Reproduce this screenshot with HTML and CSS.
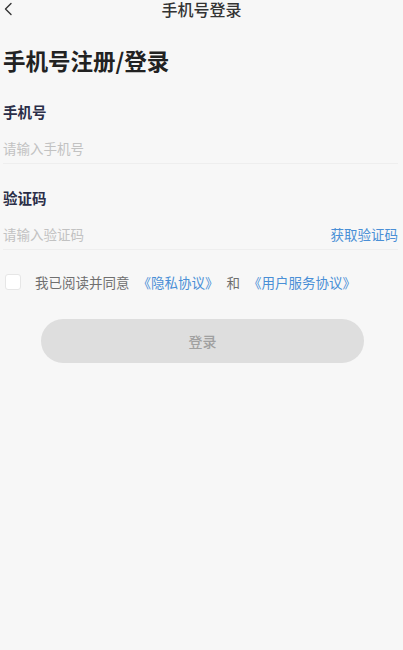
FILE: index.html
```html
<!DOCTYPE html>
<html lang="zh-CN">
<head>
<meta charset="utf-8">
<meta name="viewport" content="width=device-width, initial-scale=1">
<title>手机号登录</title>
<link rel="stylesheet" href="styles.css">
</head>
<body>
<div class="page">
  <header class="nav">
    <div class="nav-left">
      <svg class="back" width="10" height="14" viewBox="0 0 10 14" aria-hidden="true">
        <path d="M8 1.5 L2.5 7 L8 12.5" fill="none" stroke="#333" stroke-width="1.4" stroke-linecap="round" stroke-linejoin="round"/>
      </svg>
    </div>
    <div class="nav-title">手机号登录</div>
    <div class="nav-right"></div>
  </header>

  <main class="content">
    <h1 class="title">手机号注册/登录</h1>

    <div class="field field-first">
      <div class="label">手机号</div>
      <div class="input-row">
        <span class="placeholder">请输入手机号</span>
      </div>
    </div>

    <div class="field">
      <div class="label">验证码</div>
      <div class="input-row">
        <span class="placeholder">请输入验证码</span>
        <span class="get-code">获取验证码</span>
      </div>
    </div>

    <div class="agree">
      <span class="checkbox"></span>
      <span class="agree-text">我已阅读并同意</span>
      <span class="link">《隐私协议》</span>
      <span class="agree-text and">和</span>
      <span class="link">《用户服务协议》</span>
    </div>

    <button class="login-btn" type="button">登录</button>
  </main>
</div>
</body>
</html>
```

FILE: styles.css
```css
html, body {
  margin: 0;
  padding: 0;
  background: #f7f7f7;
}

body {
  font-family: "Noto Sans CJK SC", "Noto Sans", sans-serif;
  color: #333;
}

.page {
  min-height: 650px;
}

.nav {
  display: grid;
  grid-template-columns: 1fr auto 1fr;
  align-items: center;
  height: 18px;
}

.nav-left {
  display: flex;
  align-items: center;
  padding-left: 3px;
}

.back {
  display: block;
}

.nav-title {
  font-size: 16px;
  line-height: 18px;
  font-weight: 500;
  color: #333;
}

.content {
  padding: 0 5px 0 3px;
}

.title {
  margin: 27px 0 0;
  font-size: 22.5px;
  line-height: 30px;
  font-weight: 700;
  color: #222;
}

.field {
  margin-top: 24px;
}

.field-first {
  margin-top: 27px;
}

.label {
  font-size: 14.5px;
  line-height: 20px;
  font-weight: 700;
  color: #2b2e48;
}

.input-row {
  display: flex;
  align-items: center;
  justify-content: space-between;
  height: 30px;
  margin-top: 11px;
  border-bottom: 1px solid #eeeeee;
}

.placeholder {
  font-size: 13.5px;
  color: #c2c2c2;
}

.get-code {
  font-size: 13.5px;
  color: #4a8fd6;
}

.agree {
  display: flex;
  align-items: center;
  height: 20px;
  margin-top: 22px;
  padding-left: 2px;
  font-size: 13.5px;
}

.checkbox {
  width: 14px;
  height: 14px;
  border: 1px solid #e6e6e6;
  border-radius: 3px;
  background: #fff;
  margin-right: 14px;
}

.agree-text {
  color: #6f6f6f;
}

.link {
  color: #4a8fd6;
  margin-left: 8px;
}

.and {
  margin-left: 8px;
}

.login-btn {
  display: block;
  width: 323px;
  height: 44px;
  margin: 27px 0 0 38px;
  border: none;
  border-radius: 22px;
  background: #dedede;
  color: #a0a0a0;
  font-family: "Noto Sans CJK SC", "Noto Sans", sans-serif;
  font-size: 14px;
  font-weight: 500;
  padding: 0;
}
```
